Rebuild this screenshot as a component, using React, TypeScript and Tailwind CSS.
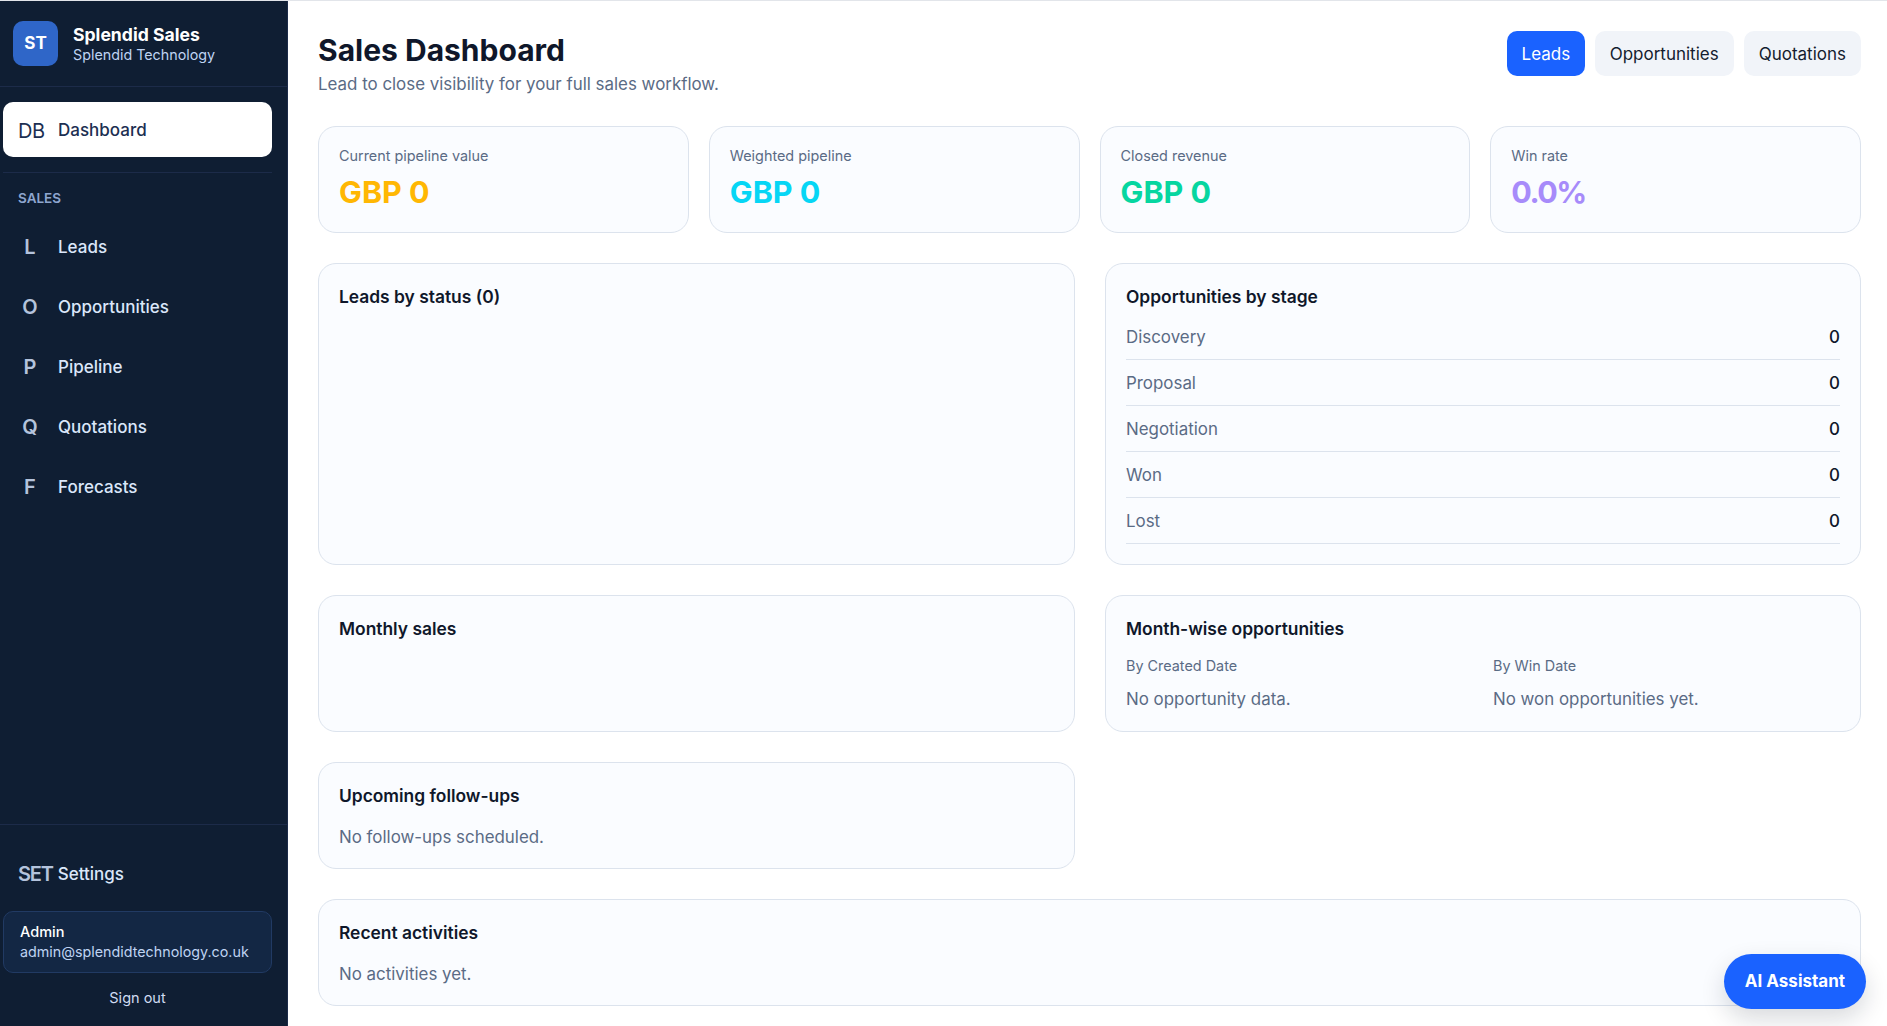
const font = { fontFamily: "Inter, sans-serif" };

const navItems = [
  { letter: "L", label: "Leads" },
  { letter: "O", label: "Opportunities" },
  { letter: "P", label: "Pipeline" },
  { letter: "Q", label: "Quotations" },
  { letter: "F", label: "Forecasts" },
];

const stats = [
  { label: "Current pipeline value", value: "GBP 0", color: "text-[#ffb703]", extra: "" },
  { label: "Weighted pipeline", value: "GBP 0", color: "text-[#06d6f5]", extra: "" },
  { label: "Closed revenue", value: "GBP 0", color: "text-[#06d6a0]", extra: "" },
  { label: "Win rate", value: "0.0%", color: "text-[#a78bfa]", extra: "tracking-[-1.5px]" },
];

const stages = ["Discovery", "Proposal", "Negotiation", "Won", "Lost"];

function Card({ title, className, children }: { title: string; className: string; children?: React.ReactNode }) {
  return (
    <div className={`rounded-[18px] border border-[#dce3ed] bg-[#fafcff] px-5 pt-[22px] ${className}`}>
      <h3 className="text-[17.4px] font-semibold leading-[22px] text-[#0f172a]">{title}</h3>
      {children}
    </div>
  );
}

function Sidebar() {
  return (
    <aside className="flex w-[288px] shrink-0 flex-col border-r border-[#1c2b49] bg-[#0f1e33]">
      <div className="flex h-[86px] items-center gap-[15px] border-b border-[#1c2b49] pl-[13px]">
        <div className="flex h-[45px] w-[45px] items-center justify-center rounded-[10px] bg-[#2f66c8] text-[17px] font-bold text-white">ST</div>
        <div>
          <div className="text-[17.6px] font-bold leading-[22px] text-white">Splendid Sales</div>
          <div className="text-[14.3px] leading-[18px] text-[#bfd3f2]">Splendid Technology</div>
        </div>
      </div>
      <div className="mx-[3px] mt-[15px] flex h-[55px] w-[269px] items-center rounded-[10px] bg-white pl-[15px] pt-[2px] text-[17px] font-medium text-[#1c2f52]">
        <span className="w-[40px] text-[20px] font-normal tracking-[-0.5px]">DB</span>
        <span>Dashboard</span>
      </div>
      <div className="mx-[3px] mt-[15px] w-[269px] border-t border-[#1c2b49]" />
      <div className="mt-[17px] pl-[18px] text-[13.5px] font-semibold leading-4 text-[#8ea6cf]">SALES</div>
      <nav className="mt-[12px] flex flex-col">
        {navItems.map((item) => (
          <div key={item.label} className="flex h-[60px] items-center text-[17px] font-medium text-[#dbe7fa]">
            <span className="w-[58px] pb-[2px] pl-[2px] text-center text-[20px] font-semibold text-[#b4c3dc]">{item.letter}</span>
            <span>{item.label}</span>
          </div>
        ))}
      </nav>
      <div className="mt-auto border-t border-[#1c2b49] pt-[37px]">
        <div className="flex items-center gap-[5px] pl-[18px] text-[17px] font-medium leading-6 text-[#dbe7fa]">
          <span className="text-[20px] font-semibold tracking-[-1.2px] text-[#b4c3dc]">SET</span>
          <span>Settings</span>
        </div>
        <div className="mx-[3px] mt-[25px] h-[62px] w-[269px] rounded-[10px] border border-[#213a63] bg-[#132744] px-4 pt-[10px]">
          <div className="text-[14.5px] font-medium leading-[20px] text-white">Admin</div>
          <div className="text-[14.3px] leading-[20px] text-[#bfd3f2]">admin@splendidtechnology.co.uk</div>
        </div>
        <div className="mb-[18px] mt-[15px] w-[275px] text-center text-[14.5px] leading-5 text-[#cfdcf2]">Sign out</div>
      </div>
    </aside>
  );
}

export default function App() {
  return (
    <div className="flex h-[1026px] overflow-hidden border-t border-[#e2e5ea] bg-white" style={font}>
      <Sidebar />
      <main className="relative min-w-0 flex-1 pl-[30px] pr-[26px]">
        <div className="flex items-start justify-between pt-[30px]">
          <div className="pt-px">
            <h1 className="text-[30px] font-bold leading-[36px] text-[#0f172a]">Sales Dashboard</h1>
            <p className="mt-1 text-[16.9px] leading-6 text-[#5a6b85]">Lead to close visibility for your full sales workflow.</p>
          </div>
          <div className="flex gap-[10px] text-[17px]">
            <button className="h-[45px] rounded-[10px] bg-[#1a62ff] px-[14.5px] pt-[2px] text-white">Leads</button>
            <button className="h-[45px] rounded-[10px] bg-[#f1f4f9] px-[15px] pt-[2px] text-[#141c2e]">Opportunities</button>
            <button className="h-[45px] rounded-[10px] bg-[#f1f4f9] px-[15px] pt-[2px] text-[#141c2e]">Quotations</button>
          </div>
        </div>

        <div className="mt-[30px] grid grid-cols-4 gap-5">
          {stats.map((s) => (
            <div key={s.label} className="h-[107px] rounded-[18px] border border-[#dce3ed] bg-[#fafcff] px-5 pt-[19px]">
              <div className="text-[14.4px] leading-5 text-[#5a6b85]">{s.label}</div>
              <div className={`mt-[8px] text-[30.5px] font-bold leading-[36px] ${s.color} ${s.extra}`}>{s.value}</div>
            </div>
          ))}
        </div>

        <div className="mt-[30px] grid grid-cols-[757px_756px] gap-x-[30px] gap-y-[30px]">
          <Card title="Leads by status (0)" className="h-[302px]" />
          <Card title="Opportunities by stage" className="h-[302px]">
            <div className="mt-[6px]">
              {stages.map((stage) => (
                <div key={stage} className="flex h-[46px] items-center justify-between border-b border-[#dce3ed] pt-[2px] text-[16.9px] text-[#5a6b85]">
                  <span>{stage}</span>
                  <span className="font-medium text-[#0f172a]">0</span>
                </div>
              ))}
            </div>
          </Card>
          <Card title="Monthly sales" className="h-[137px]" />
          <Card title="Month-wise opportunities" className="h-[137px]">
            <div className="mt-[16px] grid grid-cols-2 gap-x-[20px]">
              <div>
                <div className="text-[14.4px] leading-5 text-[#5a6b85]">By Created Date</div>
                <div className="mt-[11px] text-[16.9px] leading-6 text-[#5a6b85]">No opportunity data.</div>
              </div>
              <div>
                <div className="text-[14.4px] leading-5 text-[#5a6b85]">By Win Date</div>
                <div className="mt-[11px] text-[16.9px] leading-6 text-[#5a6b85]">No won opportunities yet.</div>
              </div>
            </div>
          </Card>
          <Card title="Upcoming follow-ups" className="h-[107px]">
            <div className="mt-[18px] text-[16.9px] leading-6 text-[#5a6b85]">No follow-ups scheduled.</div>
          </Card>
          <Card title="Recent activities" className="col-span-2 h-[107px]">
            <div className="mt-[18px] text-[16.9px] leading-6 text-[#5a6b85]">No activities yet.</div>
          </Card>
        </div>

        <button className="absolute bottom-[17px] right-[21px] h-[55px] rounded-full bg-[#1a62ff] px-[21px] text-[17px] font-bold text-white shadow-[0_10px_24px_rgba(15,23,42,0.16)]">
          AI Assistant
        </button>
      </main>
    </div>
  );
}
